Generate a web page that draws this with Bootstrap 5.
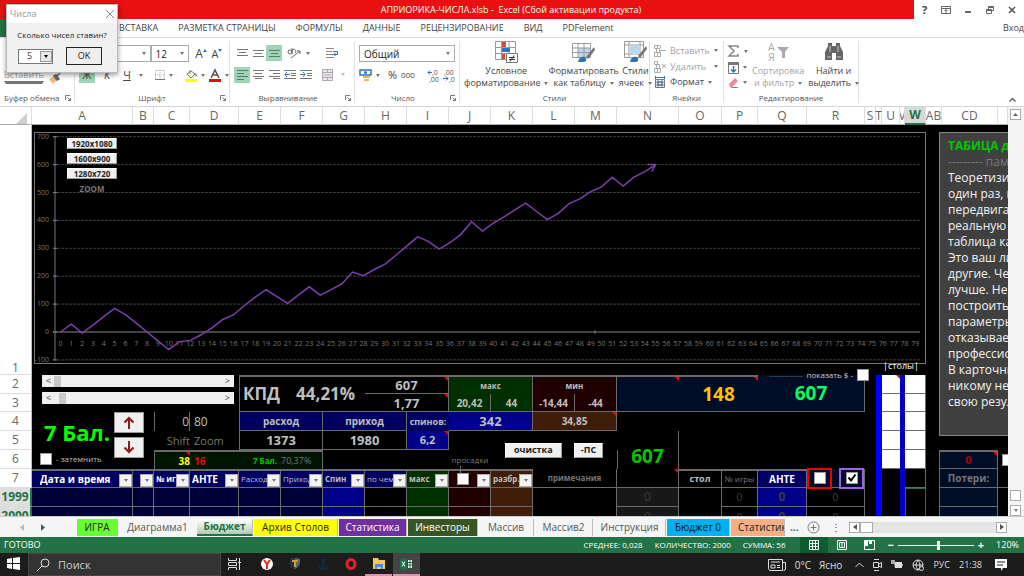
<!DOCTYPE html>
<html lang="ru">
<head>
<meta charset="utf-8">
<meta name="viewport" content="width=device-width, initial-scale=1">
<title>АПРИОРИКА-ЧИСЛА.xlsb - Excel</title>
<link rel="stylesheet" href="https://cdn.jsdelivr.net/npm/bootstrap@5.3.0/dist/css/bootstrap.min.css">
<style>
:root{--line:#6b6b6b;--navy:#000060;--ui:"Open Sans","Noto Sans",sans-serif}
body{font-family:var(--ui);font-size:9px;line-height:12px;color:#444;background:#fff;height:100vh;overflow:hidden}
button,input,select{font-family:inherit;color:inherit}
button{padding:0;border:0;background:none;line-height:12px}
a{color:inherit;text-decoration:none}
svg{display:block;flex:none;overflow:visible}
.tri{display:inline-block;flex:none;border:2px solid transparent;border-top:3px solid #777;border-bottom:0;vertical-align:middle}
/* title and menu */
.titlebar{height:19px;font-size:9px}
.titlebar .red{background:#e81010;color:#fff;padding-left:108px}
.winctl{width:110px}
.menubar{height:19px;gap:20px;padding-left:119px;border-bottom:1px solid #ddd;position:relative}
.menubar::before{content:"";position:absolute;left:0;top:0;width:40px;height:18px;background:#217346}
/* ribbon */
.ribbon{height:69px;border-bottom:1px solid #d5d5d5}
.grp{border-right:1px solid #e1e1e1;margin:3px 0;position:relative;flex:none}
.grp-name{height:11px;font-size:8px;color:#555;line-height:11px}
.corner{position:absolute;right:3px;bottom:2px}
.w-clip{width:75px}.w-font{width:155px}.w-align{width:125px}.w-num{width:105px}.w-style{width:190px}.w-cells{width:74px}.w-edit{width:135px}
.ib{width:16px;height:16px;display:flex;align-items:center;justify-content:center}
.on{background:#9fd5b7}
.box{border:1px solid #ababab;height:17px;background:#fff;font-size:10px;color:#222}
.box select,.dlg select{appearance:none;border:0;background:none;padding:0;width:100%;outline:0}
.big{font-size:9px;line-height:12px;color:#444}
.big svg{margin:0 auto 2px}
.dim{color:#a3a3a3}
/* dialog */
.dlg{position:absolute;left:6px;top:4px;width:112px;height:69px;background:#f0f0f0;border:1px solid #bbb;box-shadow:0 2px 5px #0006;z-index:5}
.dlg-t{height:18px;background:#fff;color:#999;padding:0 3px;font-size:9px}
.dlg-q{font-size:8px;color:#222;line-height:22px;padding-top:1px}
.dlg .sel{width:35px;height:15px;border:1px solid #777;background:#fff;font-size:9px}
.dlg .dd{width:12px;height:11px;background:#e8e8e8;border:1px solid #999}
.dlg .dd .tri{border-top-color:#000}
.dlg .ok{width:36px;height:18px;border:1px solid #222;font-size:9px;color:#222;background:#eee}
.dlg-b{padding:1px 15px 0 11px}
/* sheet */
.sheet{flex:1 1 0;min-height:0;overflow:hidden}
.cells{display:grid;flex:1 1 0;min-width:0;color:#bfbfbf;background:#000;
grid-template-columns:32px repeat(1,minmax(0,101fr)) minmax(0,21fr) minmax(0,36fr) minmax(0,49fr) repeat(9,minmax(0,42fr)) minmax(0,62fr) minmax(0,43fr) minmax(0,36fr) minmax(0,49fr) minmax(0,58fr) minmax(0,11fr) minmax(0,6fr) minmax(0,18fr) minmax(0,5fr) minmax(0,21fr) minmax(0,16fr) minmax(0,56fr) minmax(0,10fr);
grid-template-rows:18px 250px 19px 18px 19px 19px 19px 19px 19px 19px}
.x1{grid-column-start:1}.x2{grid-column-start:2}.x3{grid-column-start:3}.x4{grid-column-start:4}.x5{grid-column-start:5}.x6{grid-column-start:6}.x7{grid-column-start:7}.x8{grid-column-start:8}.x9{grid-column-start:9}.x10{grid-column-start:10}.x11{grid-column-start:11}.x12{grid-column-start:12}.x13{grid-column-start:13}.x14{grid-column-start:14}.x15{grid-column-start:15}.x16{grid-column-start:16}.x17{grid-column-start:17}.x18{grid-column-start:18}.x19{grid-column-start:19}.x20{grid-column-start:20}.x21{grid-column-start:21}.x22{grid-column-start:22}.x23{grid-column-start:23}.x24{grid-column-start:24}.x25{grid-column-start:25}.x26{grid-column-start:26}.x27{grid-column-start:27}
.s2{grid-column-end:span 2}.s3{grid-column-end:span 3}.s4{grid-column-end:span 4}.s23{grid-column-end:span 23}
.y1{grid-row-start:1}.y2{grid-row-start:2}.y3{grid-row-start:3}.y4{grid-row-start:4}.y5{grid-row-start:5}.y6{grid-row-start:6}.y7{grid-row-start:7}.y8{grid-row-start:8}.y9{grid-row-start:9}.y10{grid-row-start:10}
.t2{grid-row-end:span 2}.t3{grid-row-end:span 3}.t5{grid-row-end:span 5}.t8{grid-row-end:span 8}
.cell{position:relative;display:flex;align-items:center;justify-content:center;white-space:nowrap;min-width:0;border:0 solid var(--line)}
.bb{border-bottom-width:1px}.br{border-right-width:1px}.bt{border-top-width:2px}.bl{border-left-width:1px}
.hd{background:#fff;color:#666;font-size:12px;border-right:1px solid #ddd;border-bottom:1px solid #ababab}
.hd.clip{overflow:hidden}
.hd.sel{background:#d9d9d9;color:#217346;font-weight:700;border-bottom:2px solid #217346}
.rn{background:#fff;color:#666;font-size:12px;border-bottom:1px solid #ddd;border-right:1px solid #bbb}
.rn.sel{background:#dedede;color:#217346;font-weight:700;border-right:2px solid #217346}
.rn.low{align-items:flex-end}
.note::after{content:"";position:absolute;top:0;right:0;border:2px solid #f00;border-left-color:transparent;border-bottom-color:transparent}
.f8{font-size:8px}.f9{font-size:9px}.f10{font-size:10px}.f11{font-size:11px}.f12{font-size:12px}.f13{font-size:13px}.f17{font-size:17px}.f19{font-size:19px}
.bg-nv{background:var(--navy)}.bg-nd{background:#000038}.bg-bl{background:#00008b}.bg-gr{background:#003000}.bg-rd{background:#200000}.bg-bn{background:#3f1d09}.bg-dk{background:#000d26}.bg-gy{background:#181818}.bg-lg{background:#001500}
.bg-b1{background:#00f}.bg-b2{background:#0000c8}
.cy{color:#ff0}.cr{color:#f00}.cg{color:#00c800}.cd{color:#777}.cz{color:#3c3c3c}.lost{color:#b00000}.pay{color:#00ff66}.bank{color:#ffc000}
.flt{justify-content:space-between;padding-left:2px}
.flt span{overflow:hidden}
.flt button{width:13px;height:13px;background:#f3f3f3;border:1px solid #aaa;flex:none;display:flex;align-items:center;justify-content:center;align-self:flex-end}
.chk{appearance:none;width:12px;height:12px;background:#fff;border:1px solid #999;margin:0;flex:none;border-radius:0}
.chk:checked{background:#fff url("data:image/svg+xml,%3Csvg xmlns='http://www.w3.org/2000/svg' viewBox='0 0 10 10'%3E%3Cpath d='M1.500 4.500l2.500 3 4.500-6' fill='none' stroke='%23000' stroke-width='2'/%3E%3C/svg%3E")}
.chart{margin:7px 0 11px 2px;border:1px solid #777;position:relative;background:#000}
.chart svg{width:100%;height:auto}
.zoomset{position:absolute;left:32px;top:5px;width:50px}
.face{background:#f0f0f0;border:1px solid #999;border-top-color:#fff;border-left-color:#fff;color:#222;font-weight:700}
.cells .face{font-size:9px;height:15px;padding:0 6px}
.cells .wide{width:57px;margin-right:4px}
.cells .zoomset .face{font-size:8px;line-height:8px;height:11px;padding:0;margin-bottom:4px}
.hscroll{gap:5px;padding-left:10px}
.hs{height:12px;background:#f0f0f0;color:#444;width:192px}
.hs input{appearance:none;background:none;flex:1 1 0;min-width:0;height:10px;margin:0}
.hs input::-webkit-slider-thumb{appearance:none;width:7px;height:11px;background:#c8c8c8}
.score{color:#0f0;font-size:22px;font-weight:700;line-height:24px;width:74px;white-space:nowrap}
.arrowb{width:30px;height:21px;background:#f0f0f0;border:1px solid #999;display:flex;align-items:center;justify-content:center}
.kpd{justify-content:flex-start;padding-left:3px}
.total{padding-top:12px}
.stems::after{content:"";position:absolute;left:11px;top:16px;height:7px;border-left:1px solid #777;z-index:1}
.showusd{justify-content:flex-end;align-items:center;align-self:end;gap:4px;margin-right:-4px;margin-bottom:-6px;z-index:1;color:#ccc}
.tables{align-items:flex-end;padding:0 6px 3px 0}
.rbox,.pbox{width:25px;height:21px;border:2px solid #e00;display:flex;align-items:center;justify-content:center;flex:none}
.pbox{border-color:#a060e0}
.loss{margin-left:-3px}
.pick{border:1px solid #217346}
.memo{margin:7px 0 0 -3px;background:#404040;border:1px solid #888;border-right:0;color:#f2f2f2;font-size:12px;line-height:16px;padding:5px 0 0 8px;white-space:nowrap;overflow:hidden;height:304px;z-index:1}
.vs{width:16px;background:#f3f3f3;padding:2px 3px 0 2px}
.sb{width:11px;height:11px;border:1px solid #ababab;background:#fff;display:flex;align-items:center;justify-content:center}
/* bottom bars */
.sheettabs{height:21px;background:#f5f5f5;font-size:10px;border-top:1px solid #ccc}
.tb{height:17px;display:flex;align-items:center;justify-content:center;white-space:nowrap;border-right:1px solid #bbb;flex:none;color:#555;margin-right:1px}
.tabnav{width:77px}
.t-game{width:41px;background:#6f3;color:#222}.t-diag{width:77px;border:0}.t-bud{width:56px;background:linear-gradient(#fff,#b5c9b5);color:#217346;font-weight:700;border-bottom:2px solid #217346}.t-arch{width:84px;background:#ff0;color:#222}.t-stat{width:68px;background:#7030a0;color:#fff}.t-inv{width:70px;background:#375623;color:#fff}.t-m1{width:55px}.t-m2{width:58px}.t-ins{width:72px}.t-b0{width:63px;background:#00b0f0;color:#111}.t-st2{width:54px;background:#f4b084;color:#222;overflow:hidden;justify-content:flex-start;padding-left:7px}
.hbar{width:158px;background:#e4e4e4;margin-right:17px}
.hbar .thumb{width:13px}
.status{height:16px;background:#217346;color:#fff;font-size:8px}
.sum{margin-right:14px}
.view{width:28px;height:16px;display:flex;align-items:center;justify-content:center}
.act{background:#0e5c2f}
.zr{appearance:none;width:76px;height:10px;background:linear-gradient(#fff,#fff) center/100% 1px no-repeat}
.zr::-webkit-slider-thumb{appearance:none;width:3px;height:9px;background:#fff}
.pct{padding:0 5px 0 12px;font-size:9px}
.taskbar{height:23px;background:#1c1c1c;color:#ddd}
.search{width:193px;background:#333;border:1px solid #444;height:23px}
.search input{background:none;border:0;outline:0;font-size:11px;width:120px;color:#ccc;padding:0}
.search input::placeholder{color:#ccc;opacity:1}
.tk{width:27px;height:23px;display:flex;align-items:center;justify-content:center;border-bottom:2px solid transparent;margin-right:1px}
.pink{border-bottom:2px solid #e58bb5}
.xl{background:#444}
.tray{gap:9px;padding-right:17px}
</style>
</head>
<body class="d-flex flex-column">

<header class="titlebar d-flex">
  <div class="red flex-grow-1 d-flex align-items-center justify-content-center">АПРИОРИКА-ЧИСЛА.xlsb -&nbsp; Excel (Сбой активации продукта)</div>
  <div class="winctl d-flex align-items-center justify-content-between px-2">
    <button class="fw-bold f11" aria-label="Справка">?</button>
    <button aria-label="Лента"><svg width="10" height="8" fill="none" stroke="#666"><path d="M.5.5h9v7h-9zM.5 2.500h9M5 7V3.500M3.500 5L5 3.500 6.500 5"/></svg></button>
    <button aria-label="Свернуть"><svg width="8" height="8"><path d="M1 5h6v2H1z" fill="#666"/></svg></button>
    <button aria-label="Восстановить"><svg width="9" height="8" fill="none" stroke="#666"><path d="M.5 3.500h5v4h-5zM.5 4.500h5M2.500 3V.5h5v4H6M2.500 1.500h5"/></svg></button>
    <button aria-label="Закрыть"><svg width="8" height="8" stroke="#555" stroke-width="1.600"><path d="M1 1l6 6M7 1L1 7"/></svg></button>
  </div>
</header>

<nav class="menubar d-flex align-items-center flex-shrink-0">
  <a href="#">ВСТАВКА</a><a href="#">РАЗМЕТКА СТРАНИЦЫ</a><a href="#">ФОРМУЛЫ</a><a href="#">ДАННЫЕ</a><a href="#">РЕЦЕНЗИРОВАНИЕ</a><a href="#">ВИД</a><a href="#">PDFelement</a>
  <a href="#" class="ms-auto">Вход</a>
</nav>

<section class="ribbon d-flex flex-shrink-0 position-relative">
  <div class="grp w-clip d-flex flex-column">
    <div class="flex-grow-1 d-flex align-items-end pb-2 ps-1 dim">
      <div class="text-center">Вставить<br><i class="tri d-block mx-auto"></i></div>
      <svg class="ms-1" width="13" height="12"><path d="M1 7l5-3 3 4-4 4z" fill="#efb878"/><path d="M6 4l2-1 3 4-2 1zM9 4l3-3" fill="#666" stroke="#666" stroke-width="1.500"/></svg>
    </div>
    <div class="grp-name ps-1">Буфер обмена</div>
    <svg class="corner" width="6" height="6" fill="none" stroke="#777"><path d="M.5 5V.5H5M2.500 2.500l3 3M5.500 3v2.500H3"/></svg>
  </div>
  <div class="grp w-font d-flex flex-column">
    <div class="d-flex align-items-center pt-1">
      <div class="box d-flex align-items-center flex-grow-1"><i class="tri ms-auto me-1"></i></div>
      <label class="box d-flex align-items-center w-25 pe-1"><select class="ps-1" aria-label="Размер шрифта"><option>12</option></select><i class="tri"></i></label>
      <button class="ib f12 ms-1">A<svg width="4" height="10"><path d="M0 3l2-3 2 3z" fill="#2f75b5"/></svg></button>
      <button class="ib f11 me-1">A<svg width="4" height="10"><path d="M0 0l2 3 2-3z" fill="#2f75b5"/></svg></button>
    </div>
    <div class="d-flex align-items-center pt-1 ps-1 flex-grow-1 gap-1 pb-2 fw-bold f11">
      <button class="ib on">Ж</button><button class="ib fst-italic">К</button><button class="ib text-decoration-underline">Ч</button><i class="tri"></i>
      <svg class="ms-2" width="10" height="10" fill="none" stroke="#aaa"><path d="M.5.5h9v9h-9zM5 0v10M0 5h10" stroke-dasharray="1 1"/><path d="M0 9.500h10" stroke="#777"/></svg><i class="tri"></i>
      <svg class="ms-2" width="12" height="13"><path d="M2 5l4-3 4 3-4 4z" fill="#fff" stroke="#777"/><path d="M5 1v4" stroke="#777"/><path d="M10 4q3 1 1 4z" fill="#2f75b5"/><path d="M0 10h12v3H0z" fill="#ff0"/></svg><i class="tri"></i>
      <svg width="12" height="13"><path d="M2 9l4-8 4 8M3.500 6h5" stroke="#555" stroke-width="1.500" fill="none"/><path d="M0 10h12v3H0z" fill="#f00"/></svg><i class="tri"></i>
    </div>
    <div class="grp-name text-center">Шрифт</div>
    <svg class="corner" width="6" height="6" fill="none" stroke="#777"><path d="M.5 5V.5H5M2.500 2.500l3 3M5.500 3v2.500H3"/></svg>
  </div>
  <div class="grp w-align d-flex flex-column">
    <div class="d-flex align-items-center pt-1 ps-1">
      <button class="ib"><svg width="11" height="8" stroke="#777"><path d="M0 .5h11M2 3.500h7M0 6.500h11"/></svg></button>
      <button class="ib"><svg width="11" height="8" stroke="#777"><path d="M0 1.500h11M2 4.500h7M0 7.500h11"/></svg></button>
      <button class="ib on align-items-end pb-1"><svg width="11" height="8" stroke="#5b7a68"><path d="M0 1.500h11M2 4.500h7M0 7.500h11"/></svg></button>
      <button class="ib ms-1"><svg width="12" height="12" stroke="#666" fill="none"><path d="M3 11L12 4M9 4h3v3"/><circle cx="2" cy="5" r="2"/><path d="M4 1v6M4 5a2 2 0 1 1 3 1"/></svg></button><i class="tri ms-1"></i>
      <svg class="ms-3" width="13" height="12" fill="none" stroke="#888"><path d="M0 1.500h8M0 4.500h6M0 7.500h8M0 10.500h8"/><path d="M7 4.500h4.500v3H8M9.500 6L8 7.500 9.500 9" stroke="#2f75b5"/></svg>
    </div>
    <div class="d-flex align-items-center pt-1 ps-1 flex-grow-1 pb-2">
      <button class="ib on"><svg width="11" height="10" stroke="#5b7a68"><path d="M0 .5h11M0 3.500h7M0 6.500h11M0 9.500h7"/></svg></button>
      <button class="ib"><svg width="11" height="9" stroke="#777"><path d="M0 .5h11M2 3.500h7M0 6.500h11M2 8.500h7"/></svg></button>
      <button class="ib"><svg width="11" height="9" stroke="#777"><path d="M0 .5h11M4 3.500h7M0 6.500h11M4 8.500h7"/></svg></button>
      <button class="ib"><svg width="12" height="9" stroke="#777"><path d="M0 .5h12M7 3.500h5M7 5.500h5M0 8.500h12"/><path d="M1 4.500h5M3 2L1 4.500 3 7" stroke="#2f75b5" fill="none"/></svg></button>
      <button class="ib"><svg width="12" height="9" stroke="#777"><path d="M0 .5h12M7 3.500h5M7 5.500h5M0 8.500h12"/><path d="M0 4.500h5M3 2l2 2.500L3 7" stroke="#2f75b5" fill="none"/></svg></button>
      <svg class="ms-2" width="11" height="12" fill="#eee4ee" stroke="#aaa"><path d="M.5.5h10v11H.5zM.5 3.500h10M.5 8.500h10M5.500 0v3M5.500 9v3M2 6h7"/></svg><i class="tri ms-2 opacity-50"></i>
    </div>
    <div class="grp-name text-center pe-2">Выравнивание</div>
    <svg class="corner" width="6" height="6" fill="none" stroke="#777"><path d="M.5 5V.5H5M2.500 2.500l3 3M5.500 3v2.500H3"/></svg>
  </div>
  <div class="grp w-num d-flex flex-column">
    <div class="pt-1 ps-1 pe-1"><label class="box d-flex align-items-center pe-1"><select class="ps-1" aria-label="Формат числа"><option>Общий</option></select><i class="tri"></i></label></div>
    <div class="d-flex align-items-center ps-1 pt-1 flex-grow-1 pb-2 gap-1">
      <svg width="13" height="13"><path d="M1 1h11v5H1z" fill="#fff" stroke="#2f75b5" stroke-width="1.500"/><circle cx="6.500" cy="3.500" r="1.500" fill="#2f75b5"/><path d="M4 7h7v2H4zM5 10h5v2H5z" fill="#f0b060"/></svg><i class="tri"></i>
      <span class="f11 ms-1">%</span><span class="f8">000</span>
      <svg class="ms-2" width="12" height="13" font-size="7" fill="#555"><path d="M1 3.500h4M3 1.500l-2 2 2 2" stroke="#2f75b5" fill="none"/><text x="5" y="6">,0</text><text x="2" y="13">,00</text></svg>
      <svg width="12" height="13" font-size="7" fill="#555"><path d="M0 9.500h5M3 7.500l2 2-2 2" stroke="#2f75b5" fill="none"/><text x="1" y="6">,00</text><text x="6" y="13">,0</text></svg>
    </div>
    <div class="grp-name text-center pe-2">Число</div>
    <svg class="corner" width="6" height="6" fill="none" stroke="#777"><path d="M.5 5V.5H5M2.500 2.500l3 3M5.500 3v2.500H3"/></svg>
  </div>
  <div class="grp w-style d-flex flex-column">
    <div class="d-flex flex-grow-1 justify-content-between align-items-start ps-1 text-nowrap">
      <button class="big"><svg width="23" height="22"><path d="M.5.5h20v18H.5zM.5 6.500h20M.5 12.500h20M6.500.5v18M14 .5v18" fill="#fff" stroke="#999"/><path d="M7 1h4v5H7zM7 13h3v5H7z" fill="#d35230"/><path d="M7 7h8v4H7z" fill="#2f75b5"/><path d="M11.500 12.500h11v9h-11z" fill="#fff" stroke="#777"/><path d="M14 16.500h6M14 18.500h6M19 14.500l-4 6" stroke="#333"/></svg>Условное<br>форматирование<i class="tri ms-1"></i></button>
      <button class="big"><svg width="23" height="22"><path d="M.5 2.500h18v14H.5z" fill="#fff" stroke="#999"/><path d="M6 7h12v9H6z" fill="#bdd7ee"/><path d="M.5 7h18M.5 11.500h18M6 2v14M12 2v14" stroke="#999"/><path d="M22 6l-8 10 2 2 7-9z" fill="#777"/><path d="M6 21q1-6 7-5 3 4-1 5z" fill="#2f75b5"/></svg>Форматировать<br>как таблицу<i class="tri ms-1"></i></button>
      <button class="big"><svg width="23" height="22"><path d="M.5.5h19v16H.5zM.5 4h19M5 .5v16M16 .5v16M.5 13h19" fill="#fff" stroke="#999"/><path d="M5 4h11v9H5z" fill="#bdd7ee"/><path d="M22 5l-8 10 2 2 7-9z" fill="#777"/><path d="M6 21q1-6 7-5 3 4-1 5z" fill="#2f75b5"/></svg>Стили<br>ячеек<i class="tri ms-1"></i></button>
    </div>
    <div class="grp-name text-center">Стили</div>
  </div>
  <div class="grp w-cells d-flex flex-column">
    <div class="flex-grow-1 d-flex flex-column justify-content-evenly ps-1 text-nowrap">
      <button class="dim d-flex align-items-center gap-1"><svg width="12" height="12" fill="none" stroke="#aaa"><path d="M.5.5h3v3h-3zM3.500.5h3v3M.5 7.500h3v4h-3zM3.500 7.500h3v4h-3M2.500 3.500h3v4h-3zM6 5.500h6"/></svg>Вставить <i class="tri"></i></button>
      <button class="dim d-flex align-items-center gap-1"><svg width="12" height="12" fill="none" stroke="#aaa"><path d="M.5.5h3v3h-3zM.5 7.500h3v4h-3zM3.500 7.500h3v4h-3M2.500 3.500h3v4h-3zM8 3l4 4M12 3L8 7"/></svg>Удалить <i class="tri ms-1"></i></button>
      <button class="d-flex align-items-center gap-1"><svg width="12" height="12" fill="none" stroke="#777"><path d="M1.500 3.500h9v8h-9zM1 6h10M1 9h10M4 3v9M8 3v9"/><path d="M1 1.500h10M1.500 0v3M10.500 0v3M4 6h4v3H4z" stroke="#2f75b5" /></svg>Формат <i class="tri"></i></button>
    </div>
    <div class="grp-name text-center">Ячейки</div>
  </div>
  <div class="grp w-edit d-flex flex-column">
    <div class="d-flex flex-grow-1 align-items-start ps-1 text-nowrap">
      <div class="d-flex flex-column align-self-stretch justify-content-evenly">
        <div class="d-flex align-items-center gap-1"><svg width="12" height="12" fill="none" stroke="#888" stroke-width="1.500"><path d="M10 3V1H1l5 5-5 5h9V9"/></svg><i class="tri"></i></div>
        <div class="d-flex align-items-center gap-1"><svg width="11" height="12" fill="none"><path d="M.5.5h10v11H.5z" stroke="#777"/><path d="M0 0h11v3H0z" fill="#777"/><path d="M5.500 4v6M3 7.500L5.500 10 8 7.500" stroke="#2f75b5" stroke-width="1.500"/></svg><i class="tri"></i></div>
        <div class="d-flex align-items-center gap-1"><svg width="11" height="10"><path d="M1 6l6-6 3 3-6 6H2z" fill="#e9899b"/><path d="M3 9.500h7" stroke="#888"/></svg><i class="tri"></i></div>
      </div>
      <button class="big dim ms-1"><svg width="23" height="22" font-size="11" fill="#aaa"><text x="1" y="10">А</text><text x="1" y="20">Я</text><path d="M10 6h12l-4 5v6h-3v-6z"/></svg>Сортировка<br>и фильтр<i class="tri ms-1"></i></button>
      <button class="big ms-1"><svg width="20" height="22" fill="#666"><path d="M4 2h4v3h4V2h4v3l3 6v8h-7v-7H8v7H1v-8l3-6z"/><path d="M3 16h4M13 16h4M6 5v6M14 5v6" stroke="#ccc"/></svg>Найти и<br>выделить<i class="tri ms-1"></i></button>
    </div>
    <div class="grp-name text-center">Редактирование</div>
  </div>
  <svg class="ms-auto align-self-end me-2 mb-1" width="7" height="5" fill="none" stroke="#666" stroke-width="1.500"><path d="M.5 4.500l3-3 3 3"/></svg>
</section>

<main class="sheet d-flex">
  <div class="cells">
    <div class="cell hd x1 y1 align-items-end justify-content-end pe-1"><svg width="11" height="11"><path d="M11 0v11H0z" fill="#ccc"/></svg></div>
    <div class="cell hd x2 y1">A</div><div class="cell hd x3 y1">B</div><div class="cell hd x4 y1">C</div><div class="cell hd x5 y1">D</div><div class="cell hd x6 y1">E</div><div class="cell hd x7 y1">F</div><div class="cell hd x8 y1">G</div><div class="cell hd x9 y1">H</div><div class="cell hd x10 y1">I</div><div class="cell hd x11 y1">J</div><div class="cell hd x12 y1">K</div><div class="cell hd x13 y1">L</div><div class="cell hd x14 y1">M</div><div class="cell hd x15 y1">N</div><div class="cell hd x16 y1">O</div><div class="cell hd x17 y1">P</div><div class="cell hd x18 y1">Q</div><div class="cell hd x19 y1">R</div><div class="cell hd x20 y1">S</div><div class="cell hd x21 y1">T</div><div class="cell hd x22 y1">U</div><div class="cell hd x23 y1 clip">V</div><div class="cell hd sel x24 y1">W</div><div class="cell hd x25 y1 clip">AB</div><div class="cell hd x26 y1">CD</div><div class="cell hd x27 y1"></div>

    <div class="cell rn low x1 y2">1</div><div class="cell rn x1 y3">2</div><div class="cell rn x1 y4">3</div><div class="cell rn x1 y5">4</div><div class="cell rn x1 y6">5</div><div class="cell rn x1 y7">6</div><div class="cell rn x1 y8">7</div><div class="cell rn sel x1 y9">1999</div><div class="cell rn sel x1 y10">2000</div>

    <div class="chart x2 y2 s23">
      <svg id="plot" viewBox="0 0 890 231" role="img" aria-label="График бюджета"></svg>
      <div class="zoomset d-flex flex-column text-center">
        <button class="face">1920x1080</button><button class="face">1600x900</button><button class="face">1280x720</button>
        <span class="f8 fw-bold cd">ZOOM</span>
      </div>
    </div>

    <div class="x2 y3 s4 t2 d-flex flex-column align-items-start hscroll">
      <div class="hs d-flex align-items-center px-1"><button>&lt;</button><input type="range" min="0" max="100" value="2" aria-label="Сдвиг"><button>&gt;</button></div>
      <div class="hs d-flex align-items-center px-1"><button>&lt;</button><input type="range" min="0" max="100" value="5" aria-label="Масштаб"><button>&gt;</button></div>
    </div>
    <div class="x2 y5 s2 t3 ms-2 d-flex">
      <div class="d-flex flex-column justify-content-between pt-2 pb-1">
        <div class="score ps-1">7 Бал.</div>
        <label class="d-flex align-items-center gap-1 f8"><input type="checkbox" class="chk">- затемнить</label>
      </div>
      <div class="d-flex flex-column gap-1">
        <button class="arrowb" aria-label="Вверх"><svg width="12" height="13" fill="none" stroke="#8b1a1a" stroke-width="2"><path d="M6 13V2M1.500 6.500L6 2l4.500 4.500"/></svg></button>
        <button class="arrowb" aria-label="Вниз"><svg width="12" height="13" fill="none" stroke="#8b1a1a" stroke-width="2"><path d="M6 0v11M1.500 6.500L6 11l4.500-4.500"/></svg></button>
      </div>
    </div>
    <div class="cell x4 y5 bl br f12 justify-content-end">0</div><div class="cell x5 y5 f12 justify-content-start ps-1">80</div>
    <div class="cell x4 y6 f11 cd justify-content-end">Shift</div><div class="cell x5 y6 f11 cd justify-content-start ps-1">Zoom</div>
    <div class="cell x4 y7 bg-lg bl bt f10 fw-bold cy note justify-content-end">38</div>
    <div class="cell x5 y7 bg-lg bt f10 fw-bold cr justify-content-start ps-1">16</div>
    <div class="cell x6 y7 bg-lg bt f8 fw-bold cg justify-content-end pe-1">7 Бал.</div>
    <div class="cell x7 y7 bg-lg bt br f9 cd justify-content-start">70,37%</div>

    <div class="cell x6 y3 s3 t2 bt bl bb f17 fw-bold gap-3 kpd">КПД <span>44,21%</span></div>
    <div class="cell x9 y3 s2 bt bb br f13 fw-bold note">607</div><div class="cell x9 y4 s2 bb br f13 fw-bold note">1,77</div>
    <div class="cell x6 y5 s2 bl bb br bg-nv f10 fw-bold">расход</div><div class="cell x8 y5 s2 bb br bg-nv f10 fw-bold">приход</div>
    <div class="cell x10 y5 bg-nv f9 fw-bold">спинов:</div><div class="cell x10 y6 br bb bg-bl f11 fw-bold note">6,2</div>
    <div class="cell x6 y6 s2 bl bb br f13 fw-bold">1373</div><div class="cell x8 y6 s2 bb br f13 fw-bold">1980</div>
    <div class="cell x11 y3 s2 bt br bg-gr f8 fw-bold">макс</div>
    <div class="cell x11 y4 br bb bg-gr f10 fw-bold">20,42</div><div class="cell x12 y4 br bb bg-gr f10 fw-bold">44</div>
    <div class="cell x13 y3 s2 bt br bg-rd f8 fw-bold">мин</div>
    <div class="cell x13 y4 br bb bg-rd f10 fw-bold">-14,44</div><div class="cell x14 y4 br bb bg-rd f10 fw-bold">-44</div>
    <div class="cell x11 y5 s2 bb br bg-bl f13 fw-bold">342</div><div class="cell x13 y5 s2 bb br bg-bn f10 fw-bold note">34,85</div>
    <div class="cell x15 y3 t2 bt bb bg-dk note"></div>
    <div class="cell x16 y3 s2 t2 bt bb bg-dk f19 fw-bold note bank">148</div>
    <div class="cell x18 y3 s2 t2 bb br bg-dk f19 fw-bold"><span class="pay">607</span></div>
    <label class="cell x18 y2 s2 f8 showusd"><span class="cd">-------------</span>показать $ -<input type="checkbox" class="chk"></label>
    <div class="cell x12 y6 s3 t2 gap-2"><button class="face wide">очистка</button><button class="face">-ПС</button></div>
    <div class="cell x15 y7 bl"></div>
    <div class="cell x15 y6 t2 br f19 fw-bold cg total">607</div>
    <div class="cell x11 y7 f8 cd stems">просадки</div>

    <div class="cell flt x2 y8 bb br bt bg-nv text-white f10 fw-bold ps-2"><span>Дата и время</span><button><i class="tri"></i></button></div>
    <div class="cell flt x3 y8 bb br bt bg-nv justify-content-end"><button><i class="tri"></i></button></div>
    <div class="cell flt x4 y8 bb br bt bg-nv text-white f8 fw-bold"><span>№ игры</span><button><i class="tri"></i></button></div>
    <div class="cell flt x5 y8 bb br bt bg-nv text-white f10 fw-bold"><span>АНТЕ</span><button><i class="tri"></i></button></div>
    <div class="cell flt x6 y8 bb br bt bg-nv f8"><span>Расход</span><button><i class="tri"></i></button></div>
    <div class="cell flt x7 y8 bb br bt bg-nv f8"><span>Приход</span><button><i class="tri"></i></button></div>
    <div class="cell flt x8 y8 bb br bt bg-nv f8 fw-bold"><span>Спин</span><button><i class="tri"></i></button></div>
    <div class="cell flt x9 y8 bb br bt bg-nv f8"><span>по чем</span><button><i class="tri"></i></button></div>
    <div class="cell flt x10 y8 bb br bt bg-gr f8 fw-bold"><span>макс</span><button><i class="tri"></i></button></div>
    <div class="cell flt x11 y8 bb br bt bg-rd ps-1"><input type="checkbox" class="chk ms-1" aria-label="просадки"><button><i class="tri"></i></button></div>
    <div class="cell flt x12 y8 bb br bt bg-bn f8 fw-bold"><span>разбр.</span><button><i class="tri"></i></button></div>
    <div class="cell x13 y8 s2 bb br f8 fw-bold cd">примечания</div>
    <div class="cell x15 y8 bb br note"></div>
    <div class="cell x16 y8 bb br bt f9 fw-bold">стол</div><div class="cell x17 y8 bb br bt f8 cd">№ игры</div>
    <div class="cell x18 y8 bb br bt bg-nv f10 fw-bold text-white">АНТЕ</div>
    <div class="cell x19 y8 bb br bg-dk justify-content-between"><label class="rbox"><input type="checkbox" class="chk" aria-label="Красный"></label><label class="pbox"><input type="checkbox" class="chk" checked aria-label="Фиолетовый"></label></div>

    <div class="cell x2 y9 bb br bg-nd"></div><div class="cell x3 y9 bb br bg-nd"></div><div class="cell x4 y9 bb br bg-nd"></div><div class="cell x5 y9 bb br bg-nd"></div><div class="cell x6 y9 bb br bg-nd"></div><div class="cell x7 y9 bb br bg-nd"></div><div class="cell x8 y9 bb br bg-bl"></div><div class="cell x9 y9 bb br"></div><div class="cell x10 y9 bb br bg-gr"></div><div class="cell x11 y9 bb br bg-rd"></div><div class="cell x12 y9 bb br bg-bn"></div><div class="cell x13 y9 s2 br"></div><div class="cell x15 y9 bb br bg-gy f12 cz">0</div><div class="cell x16 y9 br"></div><div class="cell x17 y9 bb br f11 cz">0</div><div class="cell x18 y9 bb br bg-bl f12 fw-bold cz">0</div><div class="cell x19 y9 bb br f11 cz">0</div>
    <div class="cell x2 y10 br bg-nd"></div><div class="cell x3 y10 br bg-nd"></div><div class="cell x4 y10 br bg-nd"></div><div class="cell x5 y10 br bg-nd"></div><div class="cell x6 y10 br bg-nd"></div><div class="cell x7 y10 br bg-nd"></div><div class="cell x8 y10 br bg-bl"></div><div class="cell x9 y10 br"></div><div class="cell x10 y10 br bg-gr"></div><div class="cell x11 y10 br bg-rd"></div><div class="cell x12 y10 br bg-bn"></div><div class="cell x13 y10 s2 br"></div><div class="cell x15 y10 br bg-gy f12 cz">0</div><div class="cell x16 y10 br"></div><div class="cell x17 y10 br f11 cz">0</div><div class="cell x18 y10 br bg-bl f12 fw-bold cz">0</div><div class="cell x19 y10 br f11 cz">0</div>

    <div class="cell x22 y2 s3 f9 text-white tables">|столы|</div>
    <div class="x21 y3 t8 bg-b1"></div><div class="x23 y3 t8 bg-b2"></div>
    <div class="cell x22 y3 bb bg-white note"></div><div class="cell x22 y4 bb bg-white"></div><div class="cell x22 y5 bb bg-white"></div><div class="cell x22 y6 bb bg-white"></div><div class="cell x22 y7 bb bg-white"></div>
    <div class="cell x24 y3 bb br bg-white"></div><div class="cell x24 y4 bb br bg-white"></div><div class="cell x24 y5 bb br bg-white"></div><div class="cell x24 y6 bb br bg-white"></div><div class="cell x24 y7 bb br bg-white"></div>
    <div class="cell x24 y8 bb br"></div><div class="cell x24 y9 t2 pick"></div>

    <div class="memo x26 y2 s2 t5"><b class="cg">ТАБИЦА для</b><br><span class="cd">--------- памят</span><br>Теоретизиру<br>один раз, и п<br>передвигать<br>реальную и<br>таблица как<br>Это ваш лич<br>другие. Чем<br>лучше. Не п<br>построить с<br>параметры<br>отказываетс<br>профессион<br>В карточны<br>никому не д<br>свою резуль</div>
    <div class="cell x26 y7 bt bb bl br bg-dk f11 fw-bold note loss"><span class="lost">0</span></div>
    <div class="cell x26 y8 bb bl br bg-dk f10 fw-bold cd loss">Потери:</div>
    <div class="cell x26 y9 bb bl br bg-dk loss"></div><div class="cell x26 y10 bl br bg-dk loss"></div>
    <div class="cell x27 y7 justify-content-start ps-1 overflow-hidden"><input type="checkbox" class="chk" aria-label="Потери"></div><div class="cell x27 y8 bb"></div>
  </div>
  <div class="vs d-flex flex-column align-items-center">
    <button class="sb" aria-label="Вверх"><svg width="5" height="3"><path d="M0 3l2.500-3L5 3z" fill="#666"/></svg></button>
    <div class="sb mt-auto mb-1"></div>
    <button class="sb" aria-label="Вниз"><i class="tri"></i></button>
  </div>
</main>

<nav class="sheettabs d-flex align-items-center flex-shrink-0">
  <div class="tabnav"><svg width="76" height="7"><path d="M24 0v7l-4-3.500z" fill="#bbb"/><path d="M41 0v7l4-3.500z" fill="#217346"/></svg></div>
  <a href="#" class="tb t-game">ИГРА</a><a href="#" class="tb t-diag">Диаграмма1</a><a href="#" class="tb t-bud">Бюджет</a><a href="#" class="tb t-arch">Архив Столов</a><a href="#" class="tb t-stat">Статистика</a><a href="#" class="tb t-inv">Инвесторы</a><a href="#" class="tb t-m1">Массив</a><a href="#" class="tb t-m2">Массив2</a><a href="#" class="tb t-ins">Инструкция</a><a href="#" class="tb t-b0">Бюджет 0</a><a href="#" class="tb t-st2">Статистика</a>
  <b class="px-1 text-success">...</b>
  <button class="ms-1" aria-label="Новый лист"><svg width="13" height="13" fill="none" stroke="#777"><circle cx="6.500" cy="6.500" r="5.500"/><path d="M6.500 3.500v6M3.500 6.500h6"/></svg></button>
  <span class="ms-auto me-2">⋮</span>
  <div class="d-flex hbar"><button class="sb" aria-label="Влево"><svg width="4" height="6"><path d="M4 0v6L0 3z" fill="#555"/></svg></button><div class="sb thumb"></div><button class="sb ms-auto" aria-label="Вправо"><svg width="4" height="6"><path d="M0 0v6l4-3z" fill="#555"/></svg></button></div>
</nav>

<footer class="status d-flex align-items-center flex-shrink-0">
  <span class="ps-1 me-auto f9">ГОТОВО</span>
  <span class="me-2 pe-1">СРЕДНЕЕ: 0,028</span><span class="me-2 pe-1">КОЛИЧЕСТВО: 2000</span><span class="sum">СУММА: 56</span>
  <span class="view act"><svg width="10" height="10" fill="none" stroke="#fff"><path d="M.5.500h9v9h-9zM3.500 0v10M6.500 0v10M0 3.500h10M0 6.500h10"/></svg></span>
  <span class="view"><svg width="10" height="10" fill="none" stroke="#fff"><path d="M.5.500h9v9h-9zM2.500 2.500h5v5h-5zM4 4h2M4 6h2"/></svg></span>
  <span class="view"><svg width="11" height="10"><path d="M.5.500h10v9H.5z" fill="none" stroke="#fff"/><path d="M1 1h3v5H1zM5 1h3v3H5z" fill="#fff"/></svg></span>
  <b class="ps-1 f11">−</b>
  <input type="range" class="zr mx-1" min="0" max="100" value="54" aria-label="Масштаб">
  <b class="f11">+</b><span class="pct">120%</span>
</footer>

<div class="taskbar d-flex align-items-center flex-shrink-0">
  <button class="tk" aria-label="Пуск"><svg width="13" height="13" fill="#fff"><path d="M0 2l5-1v5H0zM6 1l7-1v6H6zM0 7h5v5l-5-1zM6 7h7v6l-7-1z"/></svg></button>
  <label class="search d-flex align-items-center"><svg class="mx-2" width="13" height="13" fill="none" stroke="#ddd"><circle cx="8" cy="5" r="4"/><path d="M5 8l-5 5"/></svg><input type="text" placeholder="Поиск" aria-label="Поиск"></label>
  <button class="tk" aria-label="Задачи"><svg width="13" height="12" fill="none" stroke="#ddd"><path d="M.5 0v2.500h8V0M.5 12V9.500h8V12M.5 4.500h8v3h-8zM11.500 0v12M10 4.500h3"/></svg></button>
  <button class="tk ms-1" aria-label="Яндекс"><svg width="12" height="12"><circle cx="6" cy="6" r="6" fill="#fff"/><path d="M3 2l3 4 3-4M6 6v5" stroke="#e52620" stroke-width="2" fill="none"/></svg></button>
  <button class="tk" aria-label="Щит"><svg width="10" height="11"><path d="M0 1q5-2 10 0v4q-1 4-5 6Q1 9 0 5z" fill="#5c646e"/><path d="M5 0v11Q1 9 0 5V1z" fill="#25303e"/><path d="M2 2h6v2H6v5H4V4H2z" fill="#d09a2c"/></svg></button>
  <button class="tk" aria-label="Якорь"><svg width="10" height="12" fill="none" stroke="#12294a" stroke-width="2"><circle cx="5" cy="2" r="1"/><path d="M5 3v8M1 7q0 4 4 4t4-4"/></svg></button>
  <button class="tk" aria-label="Опера"><svg width="12" height="12"><ellipse cx="6" cy="6" rx="4" ry="4.500" fill="none" stroke="#e8202c" stroke-width="3"/></svg></button>
  <button class="tk pink" aria-label="Проводник"><svg width="12" height="11"><path d="M0 0h5l1 2h6v9H0z" fill="#f7c948"/><path d="M2 11V6h8v5H8V9H4v2z" fill="#3a93dd"/></svg></button>
  <button class="tk pink xl" aria-label="Excel"><svg width="13" height="12"><path d="M0 1l7-1v12l-7-1z" fill="#1d7044"/><path d="M2 3.500l3 5M5 3.500l-3 5" stroke="#fff"/><path d="M8 2h4v8H8z" fill="#fff"/><path d="M8 4.500h4M8 7h4M10 2v8" stroke="#1d7044"/></svg></button>
  <div class="ms-auto d-flex align-items-center tray f10">
    <svg width="18" height="12" fill="none" stroke="#ddd"><path d="M.5.5h14v11H2Q.5 11 .5 9zM14.500 3.500h3V10q0 1.500-2 1.500M3 3h9M3 6h4v3H3zM9 6.500h3M9 8.500h3"/></svg>
    <span>0°C&nbsp;&nbsp; Ясно</span>
    <svg class="ms-1" width="9" height="6" fill="none" stroke="#ddd"><path d="M.5 5l4-4 4 4"/></svg>
    <svg width="9" height="12" fill="none" stroke="#ddd"><path d="M1 .5h5M.5 3.500h5v5h-5zM6 5l2.500-1.500v5L6 7M1 11.500h5"/></svg>
    <svg width="12" height="9"><path d="M3 2h8v6H4z" fill="#ddd"/><path d="M0 0h4v4H0zM11 4h1v2h-1z" fill="#aaa"/></svg>
    <svg width="12" height="12" fill="none" stroke="#ddd"><circle cx="6" cy="6" r="5"/><path d="M1 6h10M6 1q-4 5 0 10M6 1q4 5 0 10"/><circle cx="9.500" cy="9.500" r="2" fill="#1c1c1c"/></svg>
    <span class="f9">РУС</span><span class="f9">21:38</span>
    <svg class="ms-1" width="12" height="12"><path d="M0 0h12v9H8l-2 3V9H0z" fill="#fff"/><path d="M2 3h8M2 6h6" stroke="#1c1c1c"/></svg>
  </div>
</div>

<form class="dlg">
  <div class="dlg-t d-flex align-items-center justify-content-between"><span>Числа</span><button type="button" aria-label="Закрыть"><svg width="8" height="8" stroke="#888"><path d="M0 0l8 8M8 0L0 8"/></svg></button></div>
  <label class="dlg-q d-block text-center" for="howmany">Сколько чисел ставин?</label>
  <div class="d-flex align-items-center justify-content-between dlg-b">
    <div class="sel d-flex align-items-center ps-2"><select id="howmany"><option>5</option></select><span class="dd d-flex align-items-center justify-content-center flex-shrink-0"><i class="tri"></i></span></div>
    <button type="button" class="ok">OK</button>
  </div>
</form>

<script src="https://cdn.jsdelivr.net/npm/bootstrap@5.3.0/dist/js/bootstrap.bundle.min.js"></script>
<script>
// Budget after each spin; axis runs from -100 to 700 and 0 to 79.
const data=[0,28,-4,25,55,85,62,32,0,-32,-63,-35,-30,-10,15,45,62,95,125,152,127,103,133,162,132,152,172,215,202,224,243,275,308,341,325,297,320,350,395,362,390,413,438,462,432,403,425,460,477,503,520,555,523,555,575,600];
const px=i=>25.5+i*10.82, py=v=>199-v*.279;
let s='';
for(let v=-100;v<=700;v+=100){
  s+=`<path d="M18 ${py(v)}H885" stroke="${v?'#3c3c3c':'#888'}" ${v?'stroke-dasharray="3 1"':''}/><path d="M18 ${py(v)}h4" stroke="#888"/><text x="14" y="${py(v)+2}" text-anchor="end">${v}</text>`;
}
s+=`<path d="M20 ${py(700)}V${py(-100)}M560 ${py(0)-2}v4" stroke="#777"/>`;
for(let i=0;i<80;i++)s+=`<text x="${px(i)}" y="213" text-anchor="middle">${i}</text>`;
s+=`<polyline points="${data.map((v,i)=>px(i)+','+py(v)).join(' ')}" fill="none" stroke="#7d3fae" stroke-width="1.500"/>`;
s+=`<path d="M${px(55)-8} ${py(600)}L${px(55)} ${py(600)}L${px(55)-4} ${py(600)+7}" fill="none" stroke="#7d3fae" stroke-width="1.500"/>`;
const plot=document.getElementById('plot');
plot.setAttribute('font-size','7');plot.setAttribute('fill','#777');
plot.innerHTML=s;
</script>
</body>
</html>
